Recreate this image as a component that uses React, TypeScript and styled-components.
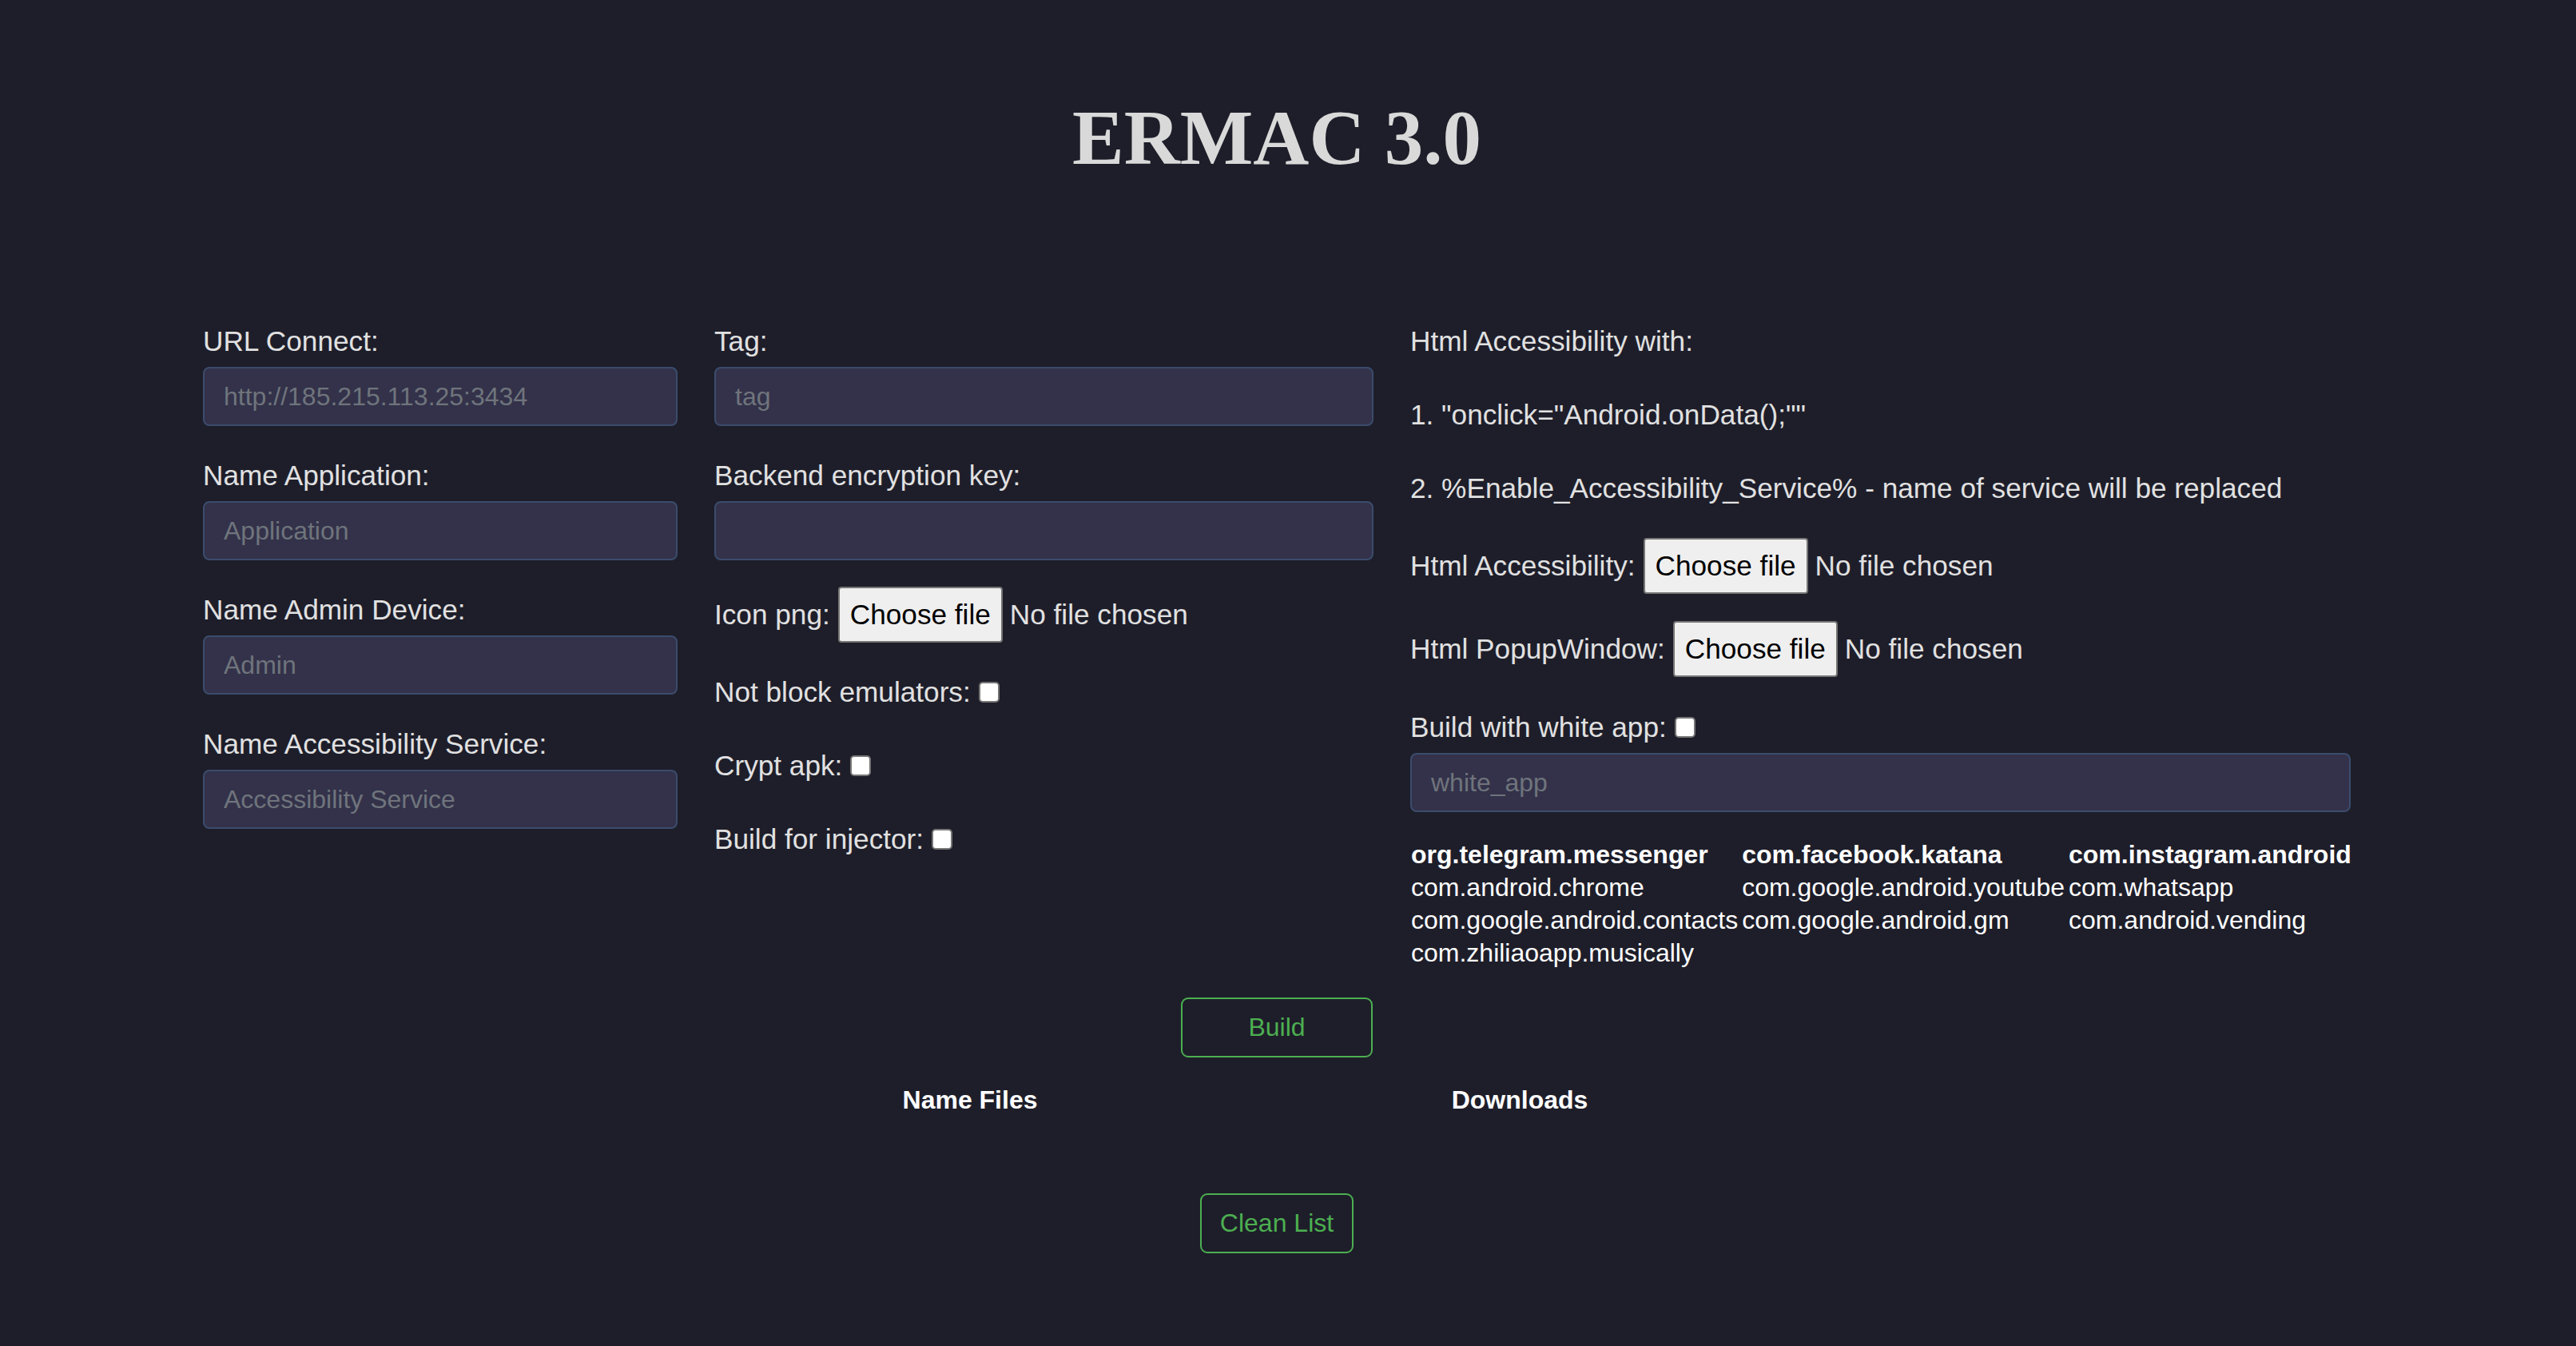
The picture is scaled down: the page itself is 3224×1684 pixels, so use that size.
import React from "react";
import styled, { createGlobalStyle } from "styled-components";

const GlobalStyle = createGlobalStyle`
  html, body {
    margin: 0;
    padding: 0;
    background: #1e1e2a;
  }
  body {
    font-family: "Liberation Sans", Arial, Helvetica, sans-serif;
    color: #e1e1e1;
  }
  * { box-sizing: border-box; }
`;

const Page = styled.div`
  min-height: 1684px;
  padding: 117px 28px 0 0;
  display: flex;
  flex-direction: column;
  align-items: center;
`;

const Title = styled.h1`
  margin: 0;
  font-family: "Liberation Serif", "Times New Roman", serif;
  font-weight: 700;
  font-size: 97px;
  line-height: 112px;
  color: #d9d9d9;
`;

const FormGrid = styled.div`
  margin-top: 176px;
  width: 2688px;
  display: grid;
  grid-template-columns: 594px 825px 1177px;
  column-gap: 46px;
  align-items: start;
`;

const Column = styled.div`
  display: flex;
  flex-direction: column;
`;

const Field = styled.div<{ $mb?: number }>`
  display: flex;
  flex-direction: column;
  margin-bottom: ${(p) => p.$mb ?? 40}px;
`;

const Label = styled.label`
  font-size: 35.2px;
  line-height: 44px;
  color: #e1e1e1;
  margin-bottom: 10px;
`;

const TextLine = styled.div<{ $mb?: number }>`
  font-size: 35.2px;
  line-height: 44px;
  color: #e1e1e1;
  margin-bottom: ${(p) => p.$mb ?? 0}px;
  white-space: nowrap;
`;

const Input = styled.input`
  height: 74px;
  width: 100%;
  padding: 0 24px;
  background: #33324a;
  border: 2px solid #3b4c6c;
  border-radius: 8px;
  font-family: "Liberation Sans", Arial, sans-serif;
  font-size: 32px;
  color: #e1e1e1;
  outline: none;
  &::placeholder {
    color: #6f747c;
  }
`;

const InlineRow = styled.div<{ $mb?: number; $h?: number }>`
  display: flex;
  align-items: center;
  height: ${(p) => p.$h ?? 44}px;
  margin-bottom: ${(p) => p.$mb ?? 0}px;
  font-size: 35.2px;
  line-height: 44px;
  color: #e1e1e1;
  white-space: nowrap;
`;

const FileButton = styled.button`
  height: 70px;
  margin: 0 9px 0 10px;
  padding: 0 13px;
  font-family: "Liberation Sans", Arial, sans-serif;
  font-size: 35.2px;
  color: #000;
  background: #efefef;
  border: 2px solid #767676;
  border-radius: 4px;
`;

const FileStatus = styled.span`
  color: #e1e1e1;
`;

const Check = styled.input.attrs({ type: "checkbox" })`
  appearance: none;
  width: 26px;
  height: 26px;
  margin: 0 0 0 10px;
  background: #ffffff;
  border: 2px solid #767676;
  border-radius: 5px;
`;

const PackageGrid = styled.div`
  display: grid;
  grid-template-columns: repeat(3, max-content);
  column-gap: 5px;
  padding-left: 1px;
  font-size: 32px;
  line-height: 41px;
  color: #ffffff;
`;

const PackageCell = styled.span<{ $head?: boolean }>`
  font-weight: ${(p) => (p.$head ? 700 : 400)};
  white-space: nowrap;
`;

const OutlineButton = styled.button<{ $w?: number }>`
  height: 75px;
  ${(p) => (p.$w ? `width: ${p.$w}px;` : "padding: 0 23px;")}
  background: transparent;
  border: 2px solid #4caf50;
  border-radius: 9px;
  color: #4caf50;
  font-family: "Liberation Sans", Arial, sans-serif;
  font-size: 32px;
`;

const BuildRow = styled.div`
  margin-top: 35px;
  display: flex;
  justify-content: center;
`;

const FilesTable = styled.div`
  margin-top: 33px;
  display: grid;
  grid-template-columns: 608px 768px;
  font-size: 32px;
  line-height: 40px;
  font-weight: 700;
  color: #ffffff;
  text-align: center;
`;

const CleanRow = styled.div`
  margin-top: 97px;
  display: flex;
  justify-content: center;
`;

const packages: { name: string; head?: boolean }[] = [
  { name: "org.telegram.messenger", head: true },
  { name: "com.facebook.katana", head: true },
  { name: "com.instagram.android", head: true },
  { name: "com.android.chrome" },
  { name: "com.google.android.youtube" },
  { name: "com.whatsapp" },
  { name: "com.google.android.contacts" },
  { name: "com.google.android.gm" },
  { name: "com.android.vending" },
  { name: "com.zhiliaoapp.musically" },
];

const leftFields = [
  { label: "URL Connect:", placeholder: "http://185.215.113.25:3434" },
  { label: "Name Application:", placeholder: "Application" },
  { label: "Name Admin Device:", placeholder: "Admin" },
  { label: "Name Accessibility Service:", placeholder: "Accessibility Service" },
];

function FilePicker({ label, mb }: { label: string; mb: number }) {
  return (
    <InlineRow $h={70} $mb={mb}>
      {label}
      <FileButton type="button">Choose file</FileButton>
      <FileStatus>No file chosen</FileStatus>
    </InlineRow>
  );
}

export default function App() {
  return (
    <>
      <GlobalStyle />
      <Page>
        <Title>ERMAC 3.0</Title>
        <FormGrid>
          <Column>
            {leftFields.map((f) => (
              <Field key={f.label}>
                <Label>{f.label}</Label>
                <Input placeholder={f.placeholder} />
              </Field>
            ))}
          </Column>
          <Column>
            <Field>
              <Label>Tag:</Label>
              <Input placeholder="tag" />
            </Field>
            <Field $mb={33}>
              <Label>Backend encryption key:</Label>
              <Input />
            </Field>
            <FilePicker label="Icon png:" mb={40} />
            <InlineRow $mb={48}>
              Not block emulators:
              <Check />
            </InlineRow>
            <InlineRow $mb={48}>
              Crypt apk:
              <Check />
            </InlineRow>
            <InlineRow>
              Build for injector:
              <Check />
            </InlineRow>
          </Column>
          <Column>
            <TextLine $mb={48}>Html Accessibility with:</TextLine>
            <TextLine $mb={48}>1. "onclick="Android.onData();""</TextLine>
            <TextLine $mb={40}>
              2. %Enable_Accessibility_Service% - name of service will be replaced
            </TextLine>
            <FilePicker label="Html Accessibility:" mb={34} />
            <FilePicker label="Html PopupWindow:" mb={41} />
            <InlineRow $mb={10}>
              Build with white app:
              <Check />
            </InlineRow>
            <Field $mb={33}>
              <Input placeholder="white_app" />
            </Field>
            <PackageGrid>
              {packages.map((p) => (
                <PackageCell key={p.name} $head={p.head}>
                  {p.name}
                </PackageCell>
              ))}
            </PackageGrid>
          </Column>
        </FormGrid>
        <BuildRow>
          <OutlineButton $w={240}>Build</OutlineButton>
        </BuildRow>
        <FilesTable>
          <span>Name Files</span>
          <span>Downloads</span>
        </FilesTable>
        <CleanRow>
          <OutlineButton>Clean List</OutlineButton>
        </CleanRow>
      </Page>
    </>
  );
}
